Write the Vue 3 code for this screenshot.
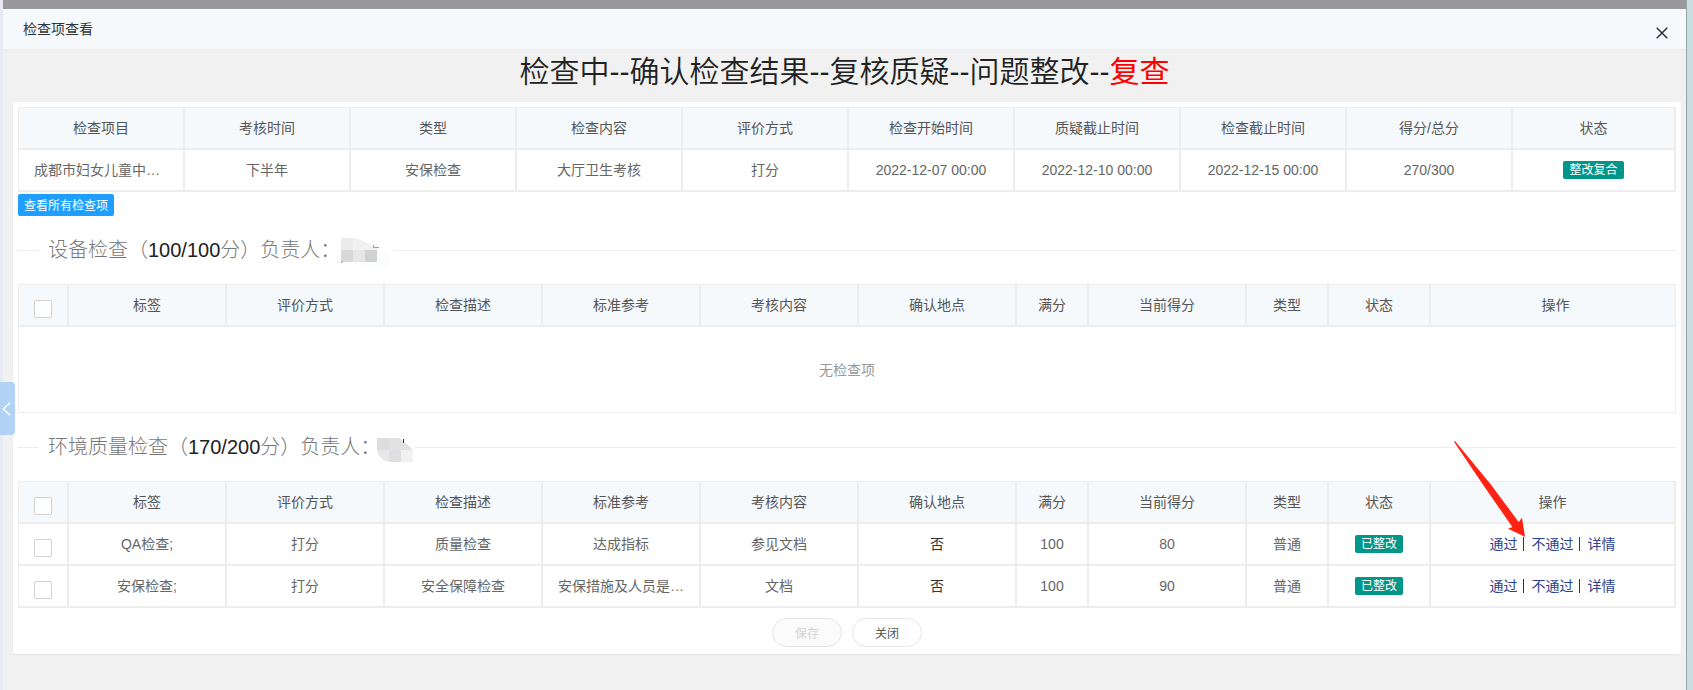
<script setup>
const summaryHead = ['检查项目', '考核时间', '类型', '检查内容', '评价方式', '检查开始时间', '质疑截止时间', '检查截止时间', '得分/总分', '状态']
const summaryRow = ['成都市妇女儿童中…', '下半年', '安保检查', '大厅卫生考核', '打分', '2022-12-07 00:00', '2022-12-10 00:00', '2022-12-15 00:00', '270/300']

const itemHead = ['标签', '评价方式', '检查描述', '标准参考', '考核内容', '确认地点', '满分', '当前得分', '类型', '状态', '操作']
const itemCols = ['check', 'wide', 'wide', 'wide', 'wide', 'wide', 'wide', 'score', 'wide', 'kind', 'state', 'rest']

const sections = [
  { id: 'device', name: '设备检查', score: '100/100', rows: [] },
  {
    id: 'env',
    name: '环境质量检查',
    score: '170/200',
    rows: [
      ['QA检查;', '打分', '质量检查', '达成指标', '参见文档', '否', '100', '80', '普通'],
      ['安保检查;', '打分', '安全保障检查', '安保措施及人员是…', '文档', '否', '100', '90', '普通'],
    ],
  },
]

const isClipped = (text) => text.endsWith('…')
</script>

<template>
  <div class="page">
    <div class="edge-left"></div>
    <main class="dialog">
      <div class="shade"></div>
      <header class="dialog-head">
        <span>检查项查看</span>
        <button type="button" class="close" aria-label="关闭窗口">
          <svg width="12" height="12" viewBox="0 0 12 12"><path d="M0.7 0.7L11.3 11.3M11.3 0.7L0.7 11.3" stroke="#2d2f38" stroke-width="1.5" fill="none" /></svg>
        </button>
      </header>

      <div class="dialog-body">
        <h1 class="steps">检查中--确认检查结果--复核质疑--问题整改--<span class="current">复查</span></h1>

        <section class="card">
          <table class="grid">
            <colgroup>
              <col v-for="n in 9" :key="n" class="col-sum" />
              <col />
            </colgroup>
            <thead>
              <tr><th v-for="h in summaryHead" :key="h">{{ h }}</th></tr>
            </thead>
            <tbody>
              <tr>
                <td v-for="t in summaryRow" :key="t" :class="{ clipped: isClipped(t) }">{{ t }}</td>
                <td><span class="badge">整改复合</span></td>
              </tr>
            </tbody>
          </table>

          <button type="button" class="view-all">查看所有检查项</button>

          <template v-for="s in sections" :key="s.id">
            <div class="divider">
              <h2 class="legend">{{ s.name }}（<span class="num">{{ s.score }}</span>分）负责人：</h2>
              <svg v-if="s.id === 'device'" class="mask" width="56" height="36" viewBox="0 0 56 36">
                <path d="M4 6H16V18H4Z" fill="#ececed" />
                <path d="M16 6C25 7 32 12 40 16V18H16Z" fill="#f1f1f1" />
                <path d="M4 18H16V30H4Z" fill="#d8d8db" />
                <path d="M16 18H28V30H16Z" fill="#e7e6e5" />
                <path d="M28 18H40V30H28Z" fill="#d1d1d1" />
                <path d="M40 18H48L56 30H40Z" fill="#fcfdfd" />
                <path d="M16 30H52V42L30 38Z" fill="#fcfdfd" />
                <path d="M4 31L6 29M36.5 13V15.5H42" stroke="#99a" fill="none" />
              </svg>
              <svg v-else class="mask" width="38" height="36" viewBox="0 0 38 36">
                <path d="M0 9H12V21H0Z" fill="#dedcde" />
                <path d="M12 9H22L32 17L36 21H12Z" fill="#e1e1e2" />
                <path d="M0 21H12V33C5 31 1 27 0 21Z" fill="#e7e6e8" />
                <path d="M12 21H24V33H12Z" fill="#dfdfe1" />
                <path d="M24 21H36V33H24Z" fill="#f1f1f2" />
                <path d="M26.5 10V14" stroke="#333" stroke-width="1" />
              </svg>
            </div>

            <table class="grid" :class="{ 'is-empty': !s.rows.length }">
              <colgroup><col v-for="(c, i) in itemCols" :key="i" :class="'col-' + c" /></colgroup>
              <thead>
                <tr>
                  <th class="pick"><input type="checkbox" :aria-label="s.name + '全选'" /></th>
                  <th v-for="h in itemHead" :key="h">{{ h }}</th>
                </tr>
              </thead>
              <tbody>
                <tr v-if="!s.rows.length"><td class="none" colspan="12">无检查项</td></tr>
                <tr v-for="row in s.rows" :key="row[0]">
                  <td class="pick"><input type="checkbox" :aria-label="row[0]" /></td>
                  <td v-for="(t, i) in row" :key="i" :class="{ clipped: isClipped(t), strong: i === 5 }">{{ t }}</td>
                  <td><span class="badge">已整改</span></td>
                  <td>
                    <div class="actions"><a href="#">通过</a><i class="bar"></i><a href="#">不通过</a><i class="bar"></i><a href="#">详情</a></div>
                  </td>
                </tr>
              </tbody>
            </table>
          </template>

          <div class="footer">
            <button type="button" class="pill" disabled>保存</button>
            <button type="button" class="pill">关闭</button>
          </div>

          <svg class="arrow" width="72" height="96" viewBox="0 0 216 288"><path d="M3 0L110 130L194 243L204 230L213 287L162 263L175 258L85 128L0 2Z" fill="#ff2313" /></svg>
        </section>
      </div>
    </main>
    <div class="edge-right"></div>

    <button type="button" class="handle" aria-label="收起">
      <svg width="9" height="14" viewBox="0 0 9 14"><path d="M8 0.7L1.3 7L8 13.3" stroke="#fff" stroke-width="1.4" fill="none" /></svg>
    </button>
  </div>
</template>

<style>
body {
  margin: 0;
}
</style>

<style scoped>
.page {
  position: relative;
  display: flex;
  min-height: 100vh;
  color: #333;
  font: 14px/20px "Liberation Sans", "Noto Sans CJK SC", sans-serif;
}
.page * {
  box-sizing: border-box;
}
button,
input {
  font-family: inherit;
  margin: 0;
}
.edge-left {
  width: 3px;
  background: #e8ebf5;
}
.edge-right {
  width: 7px;
  border-left: 1px solid #93a5a9;
  background: #c8dfe2;
}
.dialog {
  display: flex;
  flex: 1;
  flex-direction: column;
  min-width: 0;
  background: #f1f1f1;
}
.shade {
  height: 9px;
  background: #99999b;
}
.dialog-head {
  display: flex;
  align-items: center;
  justify-content: space-between;
  height: 41px;
  padding: 0 18px 0 20px;
  border-bottom: 1px solid #eee;
  background: #f5f9fc;
}
.close {
  display: flex;
  padding: 7px 0 0;
  border: 0;
  background: none;
}
.dialog-body {
  padding: 0 5px 0 10px;
}
.steps {
  margin: 0;
  padding: 0 5px 8px 0;
  color: #222;
  font-size: 30px;
  font-weight: 350;
  line-height: 44px;
  text-align: center;
}
.current {
  color: #f00;
  font-weight: 400;
}
.card {
  position: relative;
  padding: 5px;
  border-radius: 2px;
  background: #fff;
  box-shadow: 0 1px 2px rgba(0, 0, 0, 0.06);
}

/* tables */
.grid {
  width: 100%;
  table-layout: fixed;
  border-collapse: separate;
  border-spacing: 0;
  border: solid #ededed;
  border-width: 1px 0 0 1px;
  color: #666;
}
.col-sum {
  width: 166px;
}
.col-check {
  width: 50px;
}
.col-wide {
  width: 158px;
}
.col-score {
  width: 72px;
}
.col-kind {
  width: 82px;
}
.col-state {
  width: 102px;
}
th,
td {
  height: 42px;
  padding: 0 15px;
  border: solid #ededed;
  border-width: 0 2px 2px 0;
  font-weight: 400;
  text-align: center;
  white-space: nowrap;
}
th {
  background: #f5f9fc;
  color: #555;
}
.clipped {
  text-align: left;
}
.strong {
  color: #333;
}
.is-empty th:last-child {
  border-right-width: 1px;
  padding-left: 20px;
}
.none {
  height: 86px;
  border-width: 0 1px 1px 0;
  color: #999;
}
.pick {
  padding: 8px 0 0;
}
.pick input {
  display: block;
  width: 18px;
  height: 18px;
  margin: 0 auto;
  border: 1px solid #d2d2d2;
  border-radius: 2px;
  background: #fff;
  appearance: none;
}
.badge {
  display: block;
  width: fit-content;
  height: 18px;
  margin: 0 auto;
  padding: 0 6px;
  border-radius: 2px;
  background: #009688;
  color: #fff;
  font-size: 12px;
  line-height: 18px;
}
.actions {
  display: flex;
  justify-content: center;
  align-items: center;
}
.actions a {
  color: #2b4291;
  text-decoration: none;
}
.bar {
  width: 1px;
  height: 14px;
  margin: 0 8px 0 5px;
  background: #01418c;
}

.view-all {
  display: block;
  height: 22px;
  margin-top: 2px;
  padding: 0 6px;
  border: 0;
  border-radius: 2px;
  background: #1e9fff;
  color: #fff;
  font-size: 12px;
  line-height: 24px;
}

/* section titles */
.divider {
  display: flex;
  align-items: center;
  height: 68px;
}
.divider::before,
.divider::after {
  content: "";
  width: 20px;
  height: 1px;
  background: #eee;
}
.divider::after {
  flex: 1;
}
.legend {
  margin: 0 -3px 0 10px;
  color: #777;
  font-size: 20px;
  font-weight: 300;
  line-height: 28px;
}
.num {
  color: #222;
}
.mask {
  flex: none;
}

.footer {
  display: flex;
  justify-content: center;
  gap: 10px;
  padding: 10px 0 2px;
}
.pill {
  width: 70px;
  height: 29px;
  border: 1px solid #e6e6e6;
  border-radius: 15px;
  background: #fff;
  color: #555;
  font-size: 12px;
}
.pill:disabled {
  background: #fbfbfb;
  color: #d2d2d2;
}

/* overlays */
.arrow {
  position: absolute;
  right: 155px;
  bottom: 117px;
}
.handle {
  position: absolute;
  top: 382px;
  left: 0;
  display: flex;
  align-items: center;
  width: 15px;
  height: 53px;
  padding: 0 0 0 2px;
  border: 0;
  border-radius: 0 4px 4px 0;
  background: #b3d3f6;
}
</style>
